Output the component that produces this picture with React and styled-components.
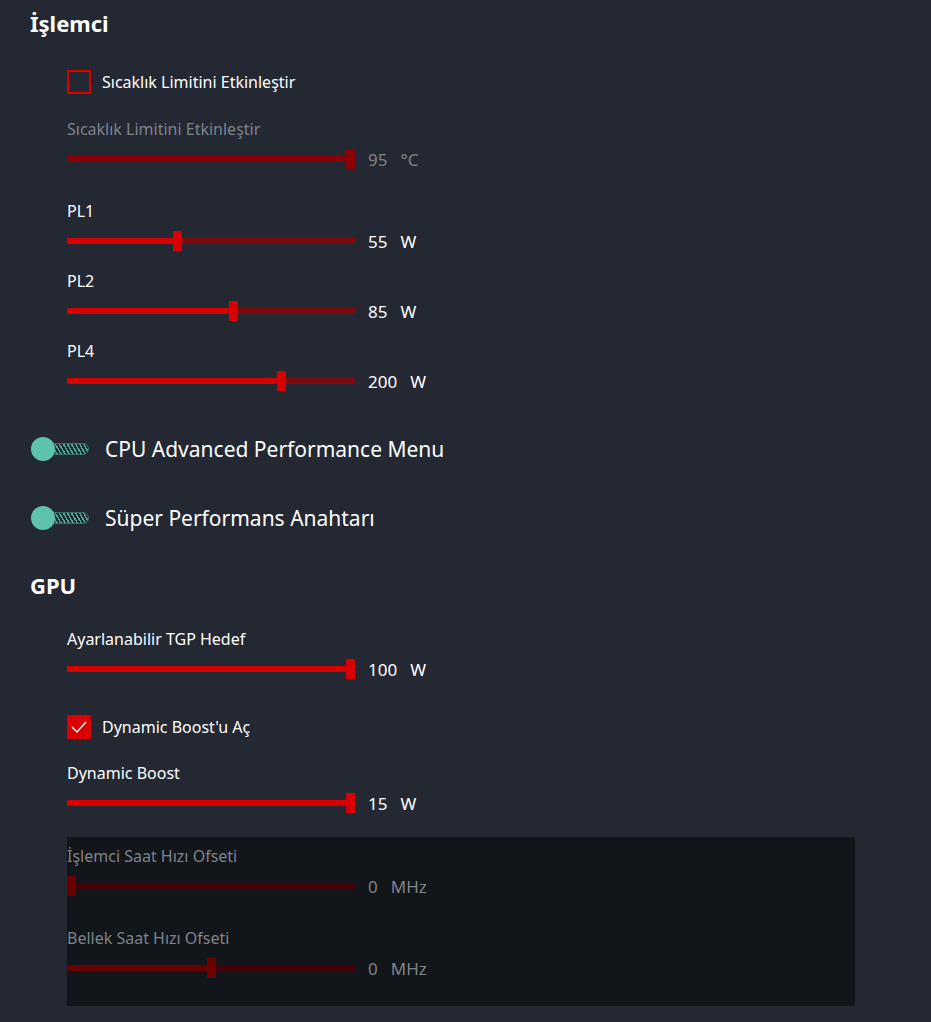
import React from 'react';
import styled, { createGlobalStyle } from 'styled-components';

const GlobalStyle = createGlobalStyle`
  html, body {
    margin: 0;
    padding: 0;
    background: #232833;
  }
  body {
    font-family: 'Noto Sans', 'Open Sans', sans-serif;
    color: #ffffff;
  }
`;

// --- page ---
const Page = styled.div`
  width: 931px;
  height: 1022px;
  overflow: hidden;
  background: #232833;
  padding-left: 30px;
  box-sizing: border-box;
`;

const Heading = styled.h2`
  margin: ${(p) => p.$top}px 0 0 0;
  font-size: 22px;
  line-height: 30px;
  font-weight: 700;
  color: #ffffff;
`;

const Indent = styled.div`
  margin-left: 37px;
  display: flex;
  flex-direction: column;
`;

// --- checkbox ---
const CheckRow = styled.label`
  display: flex;
  align-items: center;
  gap: 11px;
  height: 24px;
  margin-top: ${(p) => p.$top}px;
  font-size: 16px;
  color: #ffffff;
`;

const Box = styled.span`
  width: 24px;
  height: 24px;
  box-sizing: border-box;
  border: 2px solid #d90000;
  background: ${(p) => (p.$checked ? '#d90000' : 'transparent')};
  display: flex;
  align-items: center;
  justify-content: center;
`;

// --- slider ---
const SliderBlock = styled.div`
  margin-top: ${(p) => p.$top}px;
  display: flex;
  flex-direction: column;
`;

const SliderLabel = styled.div`
  font-size: 16px;
  line-height: 20px;
  color: ${(p) => (p.$dim ? '#7f838a' : '#ffffff')};
`;

const SliderRow = styled.div`
  margin-top: 10px;
  height: 20px;
  display: flex;
  align-items: center;
`;

const Track = styled.div`
  position: relative;
  width: 288px;
  height: 6px;
  background: ${(p) => p.$rest};
`;

const Fill = styled.div`
  height: 100%;
  background: ${(p) => p.$color};
`;

const Thumb = styled.div`
  position: absolute;
  top: -7px;
  width: 9px;
  height: 20px;
  background: ${(p) => p.$color};
`;

const Value = styled.span`
  margin-left: 13px;
  font-size: 17px;
  color: ${(p) => (p.$dim ? '#7f838a' : '#ffffff')};
`;

const Unit = styled.span`
  margin-left: 13px;
  font-size: 17px;
  color: ${(p) => (p.$dim ? '#7f838a' : '#ffffff')};
`;

const palettes = {
  active: { fill: '#d70000', rest: '#7c0a0f', thumb: '#d70000' },
  dim: { fill: '#8a0007', rest: '#8a0007', thumb: '#8a0007' },
  off: { fill: '#6a0000', rest: '#430006', thumb: '#6a0000' },
};

const Slider = ({ label, value, unit, pct, mode = 'active', top = 20 }) => {
  const c = palettes[mode];
  const dim = mode !== 'active';
  const left = pct * 279;
  return (
    <SliderBlock $top={top}>
      <SliderLabel $dim={dim}>{label}</SliderLabel>
      <SliderRow>
        <Track $rest={c.rest}>
          <Fill $color={c.fill} style={{ width: left + 4.5 }} />
          <Thumb $color={c.thumb} style={{ left }} />
        </Track>
        <Value $dim={dim}>{value}</Value>
        <Unit $dim={dim}>{unit}</Unit>
      </SliderRow>
    </SliderBlock>
  );
};

// --- toggle ---
const ToggleRow = styled.div`
  display: flex;
  align-items: center;
  height: 30px;
  margin-top: ${(p) => p.$top}px;
  font-size: 21px;
  color: #ffffff;
`;

const Switch = styled.span`
  position: relative;
  width: 58px;
  height: 24px;
  margin-left: 1px;
  margin-right: 16px;
  display: flex;
  align-items: center;
`;

const SwitchTrack = styled.span`
  margin-left: 8px;
  width: 50px;
  height: 12px;
  border-radius: 6px;
  box-sizing: border-box;
  border: 1px solid #3d6f6a;
  background: repeating-linear-gradient(
    60deg,
    #52a898 0 1.5px,
    #1c2a30 1.5px 3.5px
  );
`;

const Knob = styled.span`
  position: absolute;
  left: 0;
  top: 0;
  width: 24px;
  height: 24px;
  border-radius: 50%;
  background: #5ec3ae;
`;

const Toggle = ({ label, top }) => (
  <ToggleRow $top={top}>
    <Switch>
      <SwitchTrack />
      <Knob />
    </Switch>
    {label}
  </ToggleRow>
);

// --- disabled panel ---
const Panel = styled.div`
  margin-top: 24px;
  width: 788px;
  height: 169px;
  box-sizing: border-box;
  padding-top: 9px;
  background: #12151a;
  display: flex;
  flex-direction: column;
`;

const Check = () => (
  <svg width="18" height="14" viewBox="0 0 18 14">
    <polyline points="2,7 7,12 16,2" fill="none" stroke="#ffffff" strokeWidth="1.5" />
  </svg>
);

export default function App() {
  return (
    <Page>
      <GlobalStyle />
      <Heading $top={8}>İşlemci</Heading>
      <Indent>
        <CheckRow $top={32}>
          <Box />
          Sıcaklık Limitini Etkinleştir
        </CheckRow>
        <Slider label="Sıcaklık Limitini Etkinleştir" value="95" unit="°C" pct={1} mode="dim" top={25} />
        <Slider label="PL1" value="55" unit="W" pct={0.38} top={32} />
        <Slider label="PL2" value="85" unit="W" pct={0.58} />
        <Slider label="PL4" value="200" unit="W" pct={0.753} />
      </Indent>
      <Toggle label="CPU Advanced Performance Menu" top={43} />
      <Toggle label="Süper Performans Anahtarı" top={39} />
      <Heading $top={37}>GPU</Heading>
      <Indent>
        <Slider label="Ayarlanabilir TGP Hedef" value="100" unit="W" pct={1} top={29} />
        <CheckRow $top={36}>
          <Box $checked>
            <Check />
          </Box>
          Dynamic Boost'u Aç
        </CheckRow>
        <Slider label="Dynamic Boost" value="15" unit="W" pct={1} top={24} />
        <Panel>
          <Slider label="İşlemci Saat Hızı Ofseti" value="0" unit="MHz" pct={0} mode="off" top={0} />
          <Slider label="Bellek Saat Hızı Ofseti" value="0" unit="MHz" pct={0.5} mode="off" top={32} />
        </Panel>
      </Indent>
    </Page>
  );
}
